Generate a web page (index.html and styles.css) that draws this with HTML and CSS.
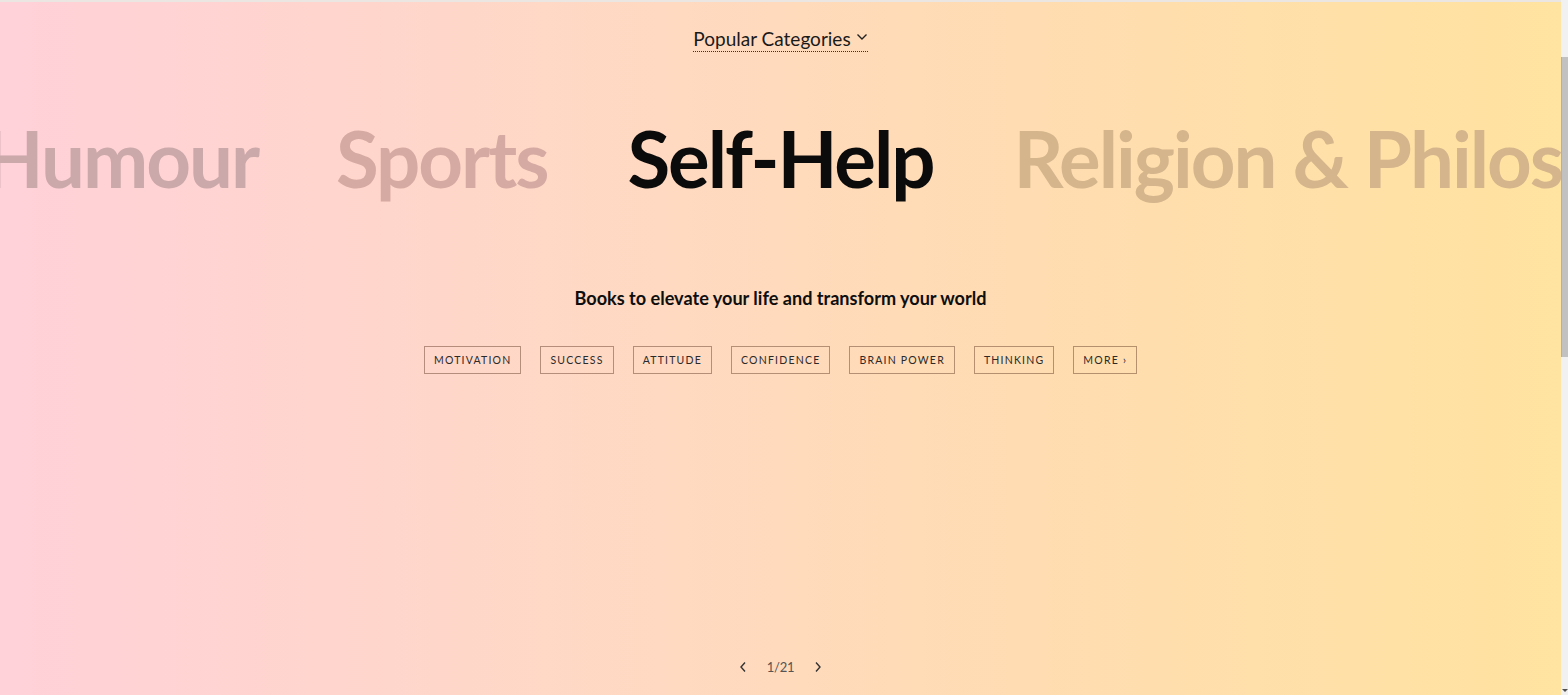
FILE: index.html
```html
<!DOCTYPE html>
<html lang="en">
<head>
<meta charset="utf-8">
<title>Popular Categories</title>
<link rel="stylesheet" href="styles.css">
</head>
<body>
<div class="page">
  <main class="hero">
    <div class="header">
      <button class="dropdown">Popular Categories
        <svg class="chev" width="12" height="8" viewBox="0 0 12 8"><path d="M1.5 1.5 L6 6 L10.5 1.5" fill="none" stroke="#222" stroke-width="1.4"/></svg>
      </button>
    </div>
    <div class="carousel">
      <div class="side left">
        <span class="cat faded c1">Humour</span>
        <span class="cat faded c2">Sports</span>
      </div>
      <span class="cat active">Self-Help</span>
      <div class="side right">
        <span class="cat faded c3">Religion &amp; Philosophy</span>
      </div>
    </div>
    <p class="subtitle">Books to elevate your life and transform your world</p>
    <ul class="tags">
      <li class="tag">Motivation</li>
      <li class="tag">Success</li>
      <li class="tag">Attitude</li>
      <li class="tag">Confidence</li>
      <li class="tag">Brain Power</li>
      <li class="tag">Thinking</li>
      <li class="tag">More ›</li>
    </ul>
    <div class="spacer"></div>
    <nav class="pager">
      <svg width="8" height="12" viewBox="0 0 8 12"><path d="M6 1.5 L2 6 L6 10.5" fill="none" stroke="#333" stroke-width="1.4"/></svg>
      <span class="count">1/21</span>
      <svg width="8" height="12" viewBox="0 0 8 12"><path d="M2 1.5 L6 6 L2 10.5" fill="none" stroke="#333" stroke-width="1.4"/></svg>
    </nav>
  </main>
  <div class="scrollbar"><div class="thumb"></div><div class="arrow"></div></div>
</div>
</body>
</html>
```
FILE: styles.css
```css
* { box-sizing: border-box; }
html, body { margin: 0; padding: 0; height: 100%; overflow: hidden; }
body { font-family: "Lato", "Inter", sans-serif; color: #111; }
.page { display: flex; height: 695px; }
.hero {
  flex: 1;
  min-width: 0;
  display: flex;
  flex-direction: column;
  align-items: center;
  background: linear-gradient(90deg, #ffd1d9 0%, #ffd8c6 35%, #ffdcb2 65%, #ffe3a0 100%);
  border-top: 2px solid #ebe6e2;
  overflow: hidden;
}
.header { margin-top: 26px; }
.dropdown {
  font-family: inherit;
  font-size: 19px;
  color: #1a1a1a;
  background: none;
  border: 0;
  border-bottom: 1px dotted #333;
  padding: 0 0 1px 0;
  line-height: 22px;
  display: flex;
  align-items: center;
  gap: 5px;
  cursor: pointer;
}
.chev { margin-top: -4px; }
.carousel {
  width: 100%;
  margin-top: 58px;
  display: grid;
  grid-template-columns: 1fr auto 1fr;
  column-gap: 80px;
  align-items: center;
}
.side { display: flex; gap: 78px; min-width: 0; overflow: hidden; white-space: nowrap; }
.side.left { justify-content: flex-end; }
.side.right { justify-content: flex-start; }
.cat {
  font-size: 78px;
  font-weight: 700;
  letter-spacing: -0.026em;
  line-height: 96px;
  white-space: nowrap;
  flex-shrink: 0;
}
.active { color: #0b0b0b; }
.c1 { color: #cba8a9; }
.c2 { color: #d5aaa2; }
.c3 { color: #d4b58c; }
.subtitle {
  margin: 81px 0 0 0;
  font-size: 18.1px;
  font-weight: 700;
  line-height: 22px;
  color: #0e0e0e;
}
.tags {
  list-style: none;
  margin: 37px 0 0 0;
  padding: 0;
  display: flex;
  gap: 19px;
}
.tag {
  height: 28px;
  padding: 0 9px;
  border: 1px solid rgba(90, 50, 30, 0.45);
  font-size: 10.5px;
  letter-spacing: 0.115em;
  text-transform: uppercase;
  color: #2a2a2a;
  display: flex;
  align-items: center;
}
.spacer { flex: 1; }
.pager {
  display: flex;
  align-items: center;
  gap: 20px;
  margin-bottom: 20px;
  color: #555;
  font-size: 13px;
}
.count { letter-spacing: -0.02em; }
.scrollbar {
  width: 7px;
  background: #f1f1f1;
  position: relative;
  display: flex;
  flex-direction: column;
}
.thumb {
  margin-top: 57px;
  height: 300px;
  background: #c1c1c1;
  border-left: 1px solid #b0b0b0;
}
.arrow {
  position: absolute;
  bottom: 3px;
  left: 1px;
  width: 0; height: 0;
  border-left: 3px solid transparent;
  border-right: 3px solid transparent;
  border-top: 3px solid #505050;
}
```
